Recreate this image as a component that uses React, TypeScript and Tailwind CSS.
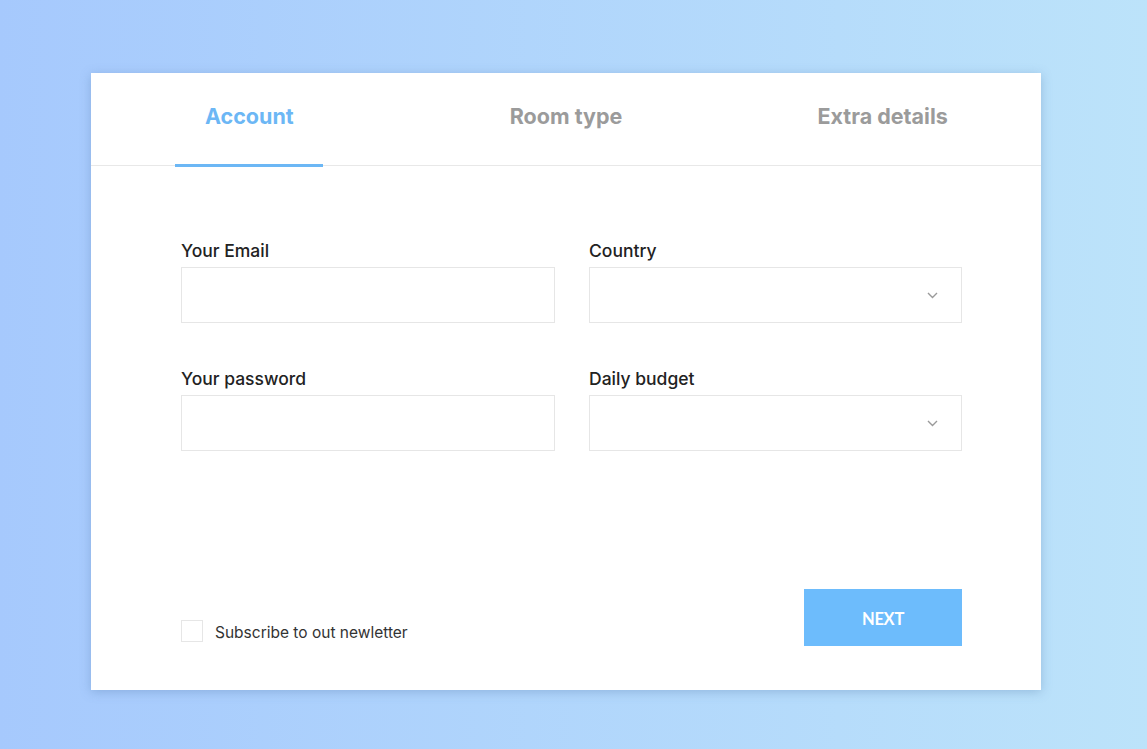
import React from "react";

function Chevron() {
  return (
    <svg width="11" height="7" viewBox="0 0 11 7" fill="none" className="shrink-0">
      <path d="M1 1l4.5 4.5L10 1" stroke="#9a9a9a" strokeWidth="1.4" />
    </svg>
  );
}

function Field({ label, select }: { label: string; select?: boolean }) {
  return (
    <div className="flex flex-col">
      <label className="text-[17.5px] font-medium leading-[22px] text-[#222] mb-[5px]">{label}</label>
      <div className="h-[56px] border border-[#e6e6e6] bg-white flex items-center justify-end pr-[23px]">
        {select && <Chevron />}
      </div>
    </div>
  );
}

export default function App() {
  return (
    <div
      className="w-[1147px] h-[749px] bg-gradient-to-r from-[#a6c9fd] to-[#bce3fa] pt-[73px] pl-[91px]"
      style={{ fontFamily: "Inter, 'Noto Sans', sans-serif" }}
    >
      <div className="w-[950px] h-[617px] bg-white shadow-[0_2px_10px_rgba(80,120,170,0.35)] flex flex-col">
        <div className="h-[93px] border-b border-[#e8e8e8] grid grid-cols-3">
          {["Account", "Room type", "Extra details"].map((t, i) => (
            <div key={t} className="relative flex items-center justify-center">
              <span
                className={
                  "text-[21.5px] font-bold mb-[5px] " +
                  (i === 0 ? "text-[#6cb7f5]" : "text-[#9b9b9b]")
                }
              >
                {t}
              </span>
              {i === 0 && (
                <div className="absolute bottom-[-2px] left-1/2 -translate-x-1/2 w-[148px] h-[3px] bg-[#6cb7f5]" />
              )}
            </div>
          ))}
        </div>
        <div className="flex-1 pl-[90px] pr-[79px] pt-[74px] pb-[44px] flex flex-col">
          <div className="grid grid-cols-[374px_373px] gap-x-[34px] gap-y-[45px]">
            <Field label="Your Email" />
            <Field label="Country" select />
            <Field label="Your password" />
            <Field label="Daily budget" select />
          </div>
          <div className="mt-auto flex items-end justify-between">
            <label className="flex items-center gap-[12px] mb-[2px]">
              <span className="w-[22px] h-[22px] border border-[#e6e6e6] bg-white" />
              <span className="text-[15.5px] text-[#333] pt-[3px]">Subscribe to out newletter</span>
            </label>
            <button
              className="w-[158px] h-[57px] bg-[#6dbcfc] text-white text-[16.5px] font-bold tracking-[-0.3px] pt-[3px]"
              style={{ fontFamily: "Lato, sans-serif" }}
            >
              NEXT
            </button>
          </div>
        </div>
      </div>
    </div>
  );
}
